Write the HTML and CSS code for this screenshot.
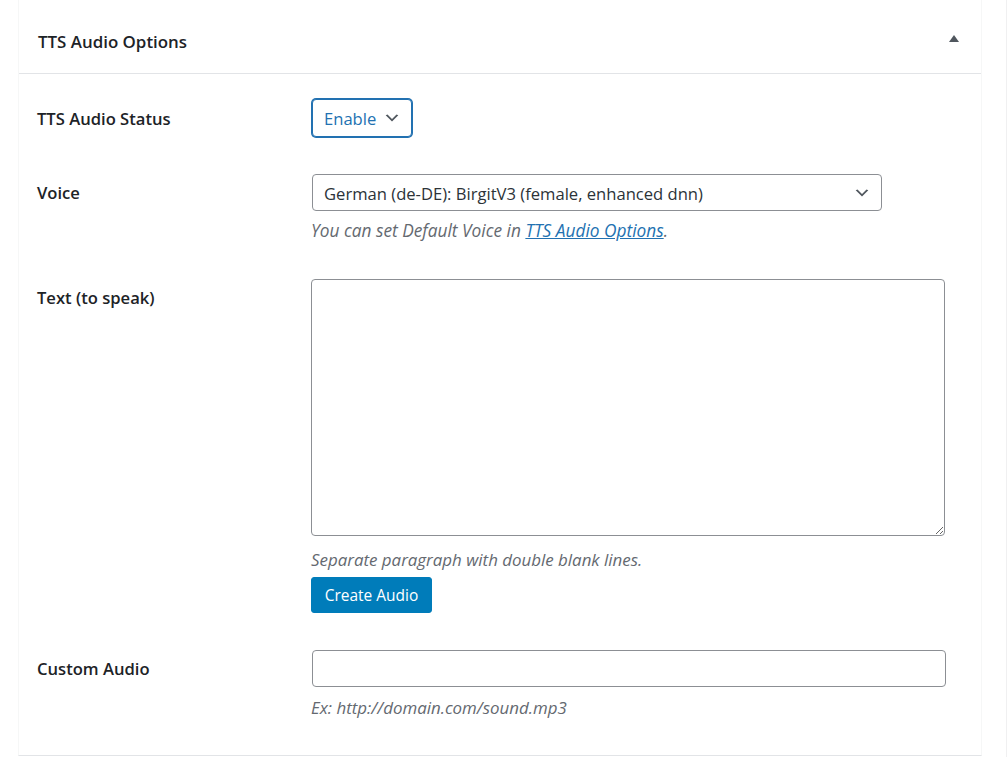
FILE: index.html
```html
<!DOCTYPE html>
<html lang="en">
<head>
<meta charset="utf-8">
<title>TTS Audio Options</title>
<link rel="stylesheet" href="styles.css">
</head>
<body>
<div class="page">
  <div class="postbox">
    <div class="postbox-header">
      <h2 class="postbox-title">TTS Audio Options</h2>
      <button class="toggle" type="button" aria-label="Toggle panel">
        <svg width="10" height="7" viewBox="0 0 10 7"><polygon points="5,0 10,7 0,7" fill="#50575e"/></svg>
      </button>
    </div>
    <div class="inside">
      <div class="row row-status">
        <label class="row-label">TTS Audio Status</label>
        <div class="row-field">
          <div class="select select-focus select-small">
            <span class="select-text">Enable</span>
            <svg class="chev" width="18" height="18" viewBox="0 0 20 20"><path d="M5 6l5 5 5-5 2 1-7 7-7-7 2-1z" fill="#50575e"/></svg>
          </div>
        </div>
      </div>
      <div class="row row-voice">
        <label class="row-label">Voice</label>
        <div class="row-field">
          <div class="select select-wide">
            <span class="select-text">German (de-DE): BirgitV3 (female, enhanced dnn)</span>
            <svg class="chev" width="18" height="18" viewBox="0 0 20 20"><path d="M5 6l5 5 5-5 2 1-7 7-7-7 2-1z" fill="#50575e"/></svg>
          </div>
          <p class="desc desc-voice">You can set Default Voice in <a href="#" class="link">TTS Audio Options</a>.</p>
        </div>
      </div>
      <div class="row row-text">
        <label class="row-label">Text (to speak)</label>
        <div class="row-field">
          <textarea class="textarea"></textarea>
          <p class="desc desc-text">Separate paragraph with double blank lines.</p>
          <button class="button-primary" type="button">Create Audio</button>
        </div>
      </div>
      <div class="row row-custom">
        <label class="row-label">Custom Audio</label>
        <div class="row-field">
          <input class="input" type="text">
          <p class="desc desc-custom">Ex: http://domain.com/sound.mp3</p>
        </div>
      </div>
    </div>
  </div>
</div>
</body>
</html>
```

FILE: styles.css
```css
* { box-sizing: border-box; }
html, body { margin: 0; padding: 0; background: #ffffff; }
body {
  font-family: "Open Sans", "Noto Sans", sans-serif;
  font-size: 16.6px;
  color: #3c434a;
}
.page {
  width: 1007px;
  min-height: 757px;
  border-right: 1px solid #f0f0f1;
}
.postbox {
  margin-left: 18px;
  width: 964px;
  border-left: 1px solid #f6f7f7;
  border-right: 1px solid #f6f7f7;
  border-bottom: 1px solid #e2e4e7;
}
.postbox-header {
  height: 74px;
  border-bottom: 1px solid #e2e4e7;
  display: flex;
  align-items: center;
  justify-content: space-between;
  padding: 10px 22px 0 19px;
}
.postbox-title {
  margin: 0;
  font-size: 16.9px;
  font-weight: 600;
  color: #1d2327;
  line-height: 22px;
}
.toggle {
  border: 0;
  background: none;
  padding: 0;
  display: flex;
  margin-top: -7px;
}
.inside {
  padding: 0 0 37px 18px;
}
.row {
  display: grid;
  grid-template-columns: 274px 1fr;
}
.row-label {
  font-weight: 600;
  color: #1d2327;
  line-height: 20px;
  padding-top: 9px;
}
.row-status { padding-top: 25px; }
.row-status .row-label { padding-top: 10px; }
.row-voice { margin-top: 37px; }
.row-text { margin-top: 38px; }
.row-custom { margin-top: 37px; }
.row-field { display: flex; flex-direction: column; align-items: flex-start; }

.select {
  display: flex;
  align-items: center;
  justify-content: space-between;
  height: 37px;
  border: 1px solid #8c8f94;
  border-radius: 4px;
  padding: 0 10px 0 11px;
  color: #2c3338;
  background: #fff;
  line-height: 20px;
}
.select-text { padding-top: 2px; }
.select-small {
  width: 100px;
  height: 38px;
  margin-left: 1px;
}
.select-focus {
  border-color: #2271b1;
  box-shadow: 0 0 0 1px #2271b1;
  color: #2271b1;
}
.select-wide { width: 570px; margin-left: 1px; }
.chev { display: block; }

.desc {
  margin: 0;
  font-style: italic;
  color: #646970;
  line-height: 20px;
  font-size: 16.9px;
}
.desc-voice { margin-top: 10px; font-size: 17.3px; }
.desc-text { margin-top: 14px; }
.desc-custom { margin-top: 11px; }
.link { color: #2271b1; text-decoration: underline; }

.textarea {
  display: block;
  width: 634px;
  height: 257px;
  border: 1px solid #8c8f94;
  border-radius: 4px;
  margin: 0;
  font: inherit;
}
.button-primary {
  margin-top: 7px;
  width: 121px;
  height: 36px;
  background: #007cba;
  border: 1px solid #007cba;
  border-radius: 3px;
  color: #fff;
  font-family: inherit;
  font-size: 15.5px;
  padding: 0;
}
.input {
  display: block;
  width: 634px;
  height: 37px;
  margin: 0 0 0 1px;
  border: 1px solid #8c8f94;
  border-radius: 4px;
  font: inherit;
}
```
